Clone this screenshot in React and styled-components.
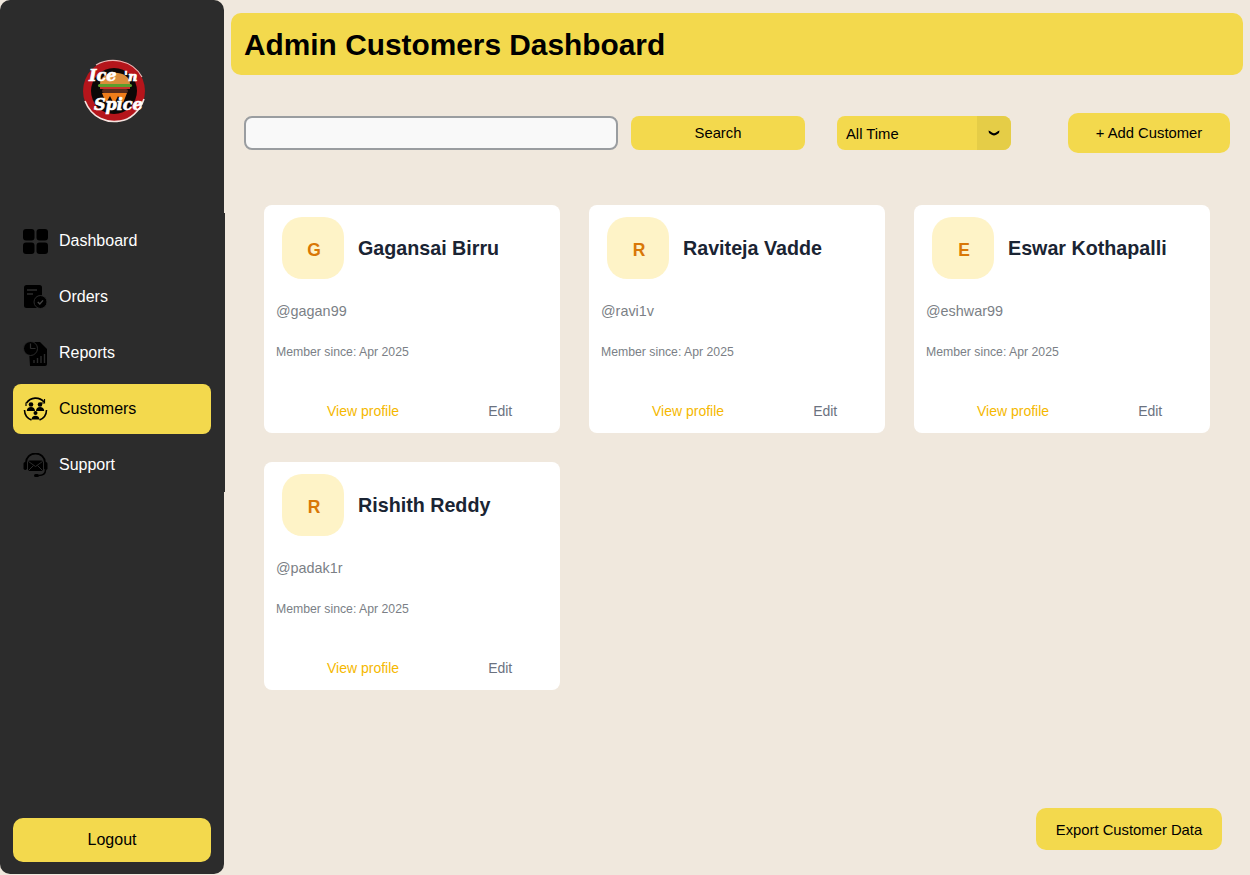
import React from "react";
import styled, { createGlobalStyle } from "styled-components";

const Global = createGlobalStyle`
  * { box-sizing: border-box; }
  html, body { margin: 0; padding: 0; height: 100%; background: #f0e8dd; }
  body { font-family: "Liberation Sans", Arial, sans-serif; }
`;

const Page = styled.div`
  display: flex;
  width: 1250px;
  height: 875px;
  overflow: hidden;
`;

const Sidebar = styled.aside`
  width: 224px;
  height: 874px;
  flex: none;
  background: #2c2c2c;
  border-radius: 10px;
  display: flex;
  flex-direction: column;
`;

const LogoArea = styled.div`
  height: 213px;
  display: flex;
  justify-content: center;
  align-items: flex-start;
  padding: 57px 0 0 5px;
`;

const Nav = styled.nav`
  width: 225px;
  background: #2c2c2c;
  padding: 3px 13px 2px;
  display: flex;
  flex-direction: column;
  gap: 6px;
`;

const NavItem = styled.a`
  height: 50px;
  width: 198px;
  display: flex;
  align-items: center;
  gap: 11px;
  padding-left: 10px;
  border-radius: 8px;
  font-size: 16px;
  color: ${(p) => (p.$active ? "#000" : "#fff")};
  background: ${(p) => (p.$active ? "#f3d94d" : "transparent")};
`;

const IconBox = styled.span`
  width: 25px;
  height: 25px;
  flex: none;
  display: block;
  svg { display: block; }
`;

const Logout = styled.button`
  margin: auto 13px 12px;
  height: 44px;
  width: 198px;
  flex: none;
  border: 0;
  border-radius: 10px;
  background: #f3d94d;
  color: #000;
  font: 16px "Liberation Sans", Arial, sans-serif;
`;

const Main = styled.main`
  flex: 1;
  min-width: 0;
  display: flex;
  flex-direction: column;
  height: 875px;
`;

const Header = styled.header`
  margin: 13px 7px 0 7px;
  height: 62px;
  background: #f3d94d;
  border-radius: 10px;
  display: flex;
  align-items: center;
  padding: 2px 0 0 13px;
`;

const Title = styled.h1`
  margin: 0;
  font-size: 29.85px;
  font-weight: 700;
  color: #000;
`;

const Toolbar = styled.div`
  display: flex;
  align-items: center;
  height: 40px;
  margin-top: 38px;
  padding-left: 20px;
`;

const SearchInput = styled.input`
  width: 374px;
  height: 34px;
  flex: none;
  border: 2px solid #9a9da0;
  border-radius: 8px;
  background: #f9f9f9;
  outline: none;
`;

const YellowButton = styled.button`
  flex: none;
  border: 0;
  background: #f3d94d;
  color: #000;
  padding: ${(p) => p.$pt || 0}px 0 ${(p) => p.$pb || 0}px;
  font: 14.8px "Liberation Sans", Arial, sans-serif;
  border-radius: ${(p) => p.$radius || 8}px;
  width: ${(p) => p.$w}px;
  height: ${(p) => p.$h}px;
  margin-left: ${(p) => p.$ml || 0}px;
`;

const SelectBox = styled.div`
  width: 174px;
  height: 34px;
  margin-left: 32px;
  flex: none;
  display: flex;
  border-radius: 8px;
  overflow: hidden;
  background: #f3d94d;
`;

const SelectLabel = styled.span`
  flex: 1;
  padding-left: 9px;
  font-size: 14.8px;
  line-height: 36px;
  color: #000;
`;

const SelectArrow = styled.span`
  width: 34px;
  background: #e5cd47;
  display: flex;
  align-items: center;
  justify-content: center;
  svg { display: block; }
`;

const Grid = styled.section`
  display: grid;
  grid-template-columns: repeat(3, 296px);
  gap: 29px;
  margin: 52px 0 0 40px;
`;

const Card = styled.article`
  height: 228px;
  background: #fff;
  border-radius: 8px;
  padding: 12px;
  display: flex;
  flex-direction: column;
`;

const CardHead = styled.div`
  display: flex;
  align-items: center;
  gap: 14px;
  padding-left: 6px;
`;

const Avatar = styled.div`
  width: 62px;
  height: 62px;
  border-radius: 20px;
  background: #fef3c7;
  color: #d97706;
  font-size: 17.5px;
  font-weight: 700;
  display: flex;
  align-items: center;
  justify-content: center;
  padding: 4px 0 0 2px;
`;

const Name = styled.h3`
  margin: 0;
  font-size: 19.7px;
  font-weight: 700;
  color: #1a2433;
`;

const Handle = styled.p`
  margin: 24px 0 0;
  font-size: 14.4px;
  line-height: 16px;
  color: #7b7f86;
`;

const Since = styled.p`
  margin: 26px 0 0;
  font-size: 12.25px;
  line-height: 14px;
  color: #7b7f86;
`;

const Actions = styled.div`
  margin-top: auto;
  margin-bottom: 2px;
  padding-left: 51px;
  display: flex;
  gap: 89px;
  font-size: 14px;
  line-height: 16px;
`;

const ActionLink = styled.a`
  color: ${(p) => (p.$primary ? "#f5b800" : "#6b7280")};
`;

const Footer = styled.div`
  margin-top: auto;
  padding: 0 28px 25px 0;
  display: flex;
  justify-content: flex-end;
`;

const Logo = () => (
  <svg width="66" height="68" viewBox="0 0 66 68">
    <circle cx="32" cy="34" r="31" fill="#b5151b" />
    <path d="M3 44C10 62 26 66 38 64C48 63 58 54 62 42" fill="none" stroke="#f3e4e0" strokeWidth="1.6" />
    <path d="M14 8C28 0 50 2 60 20" fill="none" stroke="#e9b7b5" strokeWidth="1.2" />
    <circle cx="32" cy="34" r="23" fill="#0c0807" />
    <path d="M18 27C18 12 48 12 48 27Z" fill="#d98d3b" />
    <rect x="16" y="27" width="34" height="3" rx="1.5" fill="#5c9e2e" />
    <rect x="18" y="30" width="30" height="2" fill="#c9302c" />
    <rect x="20" y="32" width="26" height="4" rx="2" fill="#5a2d1c" />
    <path d="M20 36L24 46L28 39L32 47L36 39L41 46L45 36Z" fill="#ef7d1a" />
    <g fontFamily="'DejaVu Serif', serif" fontWeight="700" fontStyle="italic" fill="#fff" stroke="#fff" strokeWidth="0.7">
      <text x="7" y="24" fontSize="16">Ice</text>
      <text x="42" y="24" fontSize="13">'n</text>
      <text x="12" y="53" fontSize="16">Spice</text>
    </g>
  </svg>
);

const GridIcon = () => (
  <svg width="25" height="25" viewBox="0 0 25 25" fill="#000">
    <rect x="0" y="0" width="11.5" height="11.5" rx="3" />
    <rect x="13.5" y="0" width="11.5" height="11.5" rx="3" />
    <rect x="0" y="13.5" width="11.5" height="11.5" rx="3" />
    <rect x="13.5" y="13.5" width="11.5" height="11.5" rx="3" />
  </svg>
);

const OrdersIcon = () => (
  <svg width="25" height="25" viewBox="0 0 25 25">
    <rect x="1" y="0" width="18" height="23" rx="2.5" fill="#000" />
    <path d="M4 5h10M4 9h6" stroke="#2c2c2c" strokeWidth="1.5" />
    <circle cx="17.5" cy="17" r="6.5" fill="#000" stroke="#2c2c2c" strokeWidth="1" />
    <path d="M14.8 17l2 2 3.2-3.6" fill="none" stroke="#444" strokeWidth="1.4" />
  </svg>
);

const ReportsIcon = () => (
  <svg width="25" height="25" viewBox="0 0 25 25">
    <path d="M6 9V3a2 2 0 0 1 2-2h9l7 7v15a2 2 0 0 1-2 2H7z" fill="#000" />
    <circle cx="7.5" cy="7.5" r="7" fill="#000" stroke="#2c2c2c" strokeWidth="1" />
    <path d="M7.5 7.5V2.5M7.5 7.5h5" stroke="#2c2c2c" strokeWidth="1.2" />
    <path d="M11 22v-3M14.5 22v-5M18 22v-7M21.5 22v-9" stroke="#2c2c2c" strokeWidth="1.4" />
  </svg>
);

const CustomersIcon = () => (
  <svg width="25" height="25" viewBox="0 0 25 25" fill="#000">
    <path d="M3.500 6A11 11 0 0 1 21 5M23.500 13a11 11 0 0 1-7 10M8.500 23a11 11 0 0 1-7-10" fill="none" stroke="#000" strokeWidth="1.600" />
    <path d="M21.500 2v4h-4M3 9V5.500" fill="none" stroke="#000" strokeWidth="1.200" />
    <circle cx="8" cy="7.500" r="2.300" />
    <circle cx="17" cy="7.500" r="2.300" />
    <path d="M3.800 14c0-2.600 1.800-4 4.200-4s4 1.400 4 4zM13 14c0-2.600 1.600-4 4-4s4.200 1.400 4.200 4z" />
    <circle cx="12.500" cy="16" r="2" />
    <path d="M8.500 22.500c0-2.400 1.600-3.800 4-3.800s4 1.400 4 3.800z" />
  </svg>
);

const SupportIcon = () => (
  <svg width="25" height="25" viewBox="0 0 25 25">
    <path d="M3 12V9.500a9.500 9 0 0 1 19 0V12" fill="none" stroke="#000" strokeWidth="1.800" />
    <rect x="0.500" y="9" width="3.500" height="8" rx="1.700" fill="#000" />
    <rect x="21" y="9" width="3.500" height="8" rx="1.700" fill="#000" />
    <rect x="5" y="7.500" width="15" height="10.500" rx="1.500" fill="#000" />
    <path d="M5.500 8.500l7 5 7-5M5.500 17.500l5-5M19.500 17.500l-5-5" fill="none" stroke="#2c2c2c" strokeWidth="1" />
    <path d="M22.500 17c0 4-3 5.500-7 5.500" fill="none" stroke="#000" strokeWidth="1.500" />
    <rect x="11" y="21" width="5" height="3" rx="1.500" fill="#000" />
  </svg>
);

const navItems = [
  { label: "Dashboard", Icon: GridIcon },
  { label: "Orders", Icon: OrdersIcon },
  { label: "Reports", Icon: ReportsIcon },
  { label: "Customers", Icon: CustomersIcon, active: true },
  { label: "Support", Icon: SupportIcon },
];

const customers = [
  { name: "Gagansai Birru", handle: "@gagan99" },
  { name: "Raviteja Vadde", handle: "@ravi1v" },
  { name: "Eswar Kothapalli", handle: "@eshwar99" },
  { name: "Rishith Reddy", handle: "@padak1r" },
];

export default function App() {
  return (
    <Page>
      <Global />
      <Sidebar>
        <LogoArea>
          <Logo />
        </LogoArea>
        <Nav>
          {navItems.map(({ label, Icon, active }) => (
            <NavItem key={label} $active={active}>
              <IconBox>
                <Icon />
              </IconBox>
              {label}
            </NavItem>
          ))}
        </Nav>
        <Logout>Logout</Logout>
      </Sidebar>
      <Main>
        <Header>
          <Title>Admin Customers Dashboard</Title>
        </Header>
        <Toolbar>
          <SearchInput />
          <YellowButton $w={174} $h={34} $ml={13} $pb={1}>Search</YellowButton>
          <SelectBox>
            <SelectLabel>All Time</SelectLabel>
            <SelectArrow>
              <svg width="12" height="6" viewBox="0 0 12 6">
                <path d="M0.500 0.500C3 1.500 4.500 3 6 3.300C7.500 3 9 1.500 11.500 0.500L11 3C9 4.500 7.500 5.500 6 5.500C4.500 5.500 3 4.500 1 3Z" fill="#000" />
              </svg>
            </SelectArrow>
          </SelectBox>
          <YellowButton $w={162} $h={40} $ml={57} $radius={10} $pb={1}>+ Add Customer</YellowButton>
        </Toolbar>
        <Grid>
          {customers.map((c) => (
            <Card key={c.handle}>
              <CardHead>
                <Avatar>{c.name[0]}</Avatar>
                <Name>{c.name}</Name>
              </CardHead>
              <Handle>{c.handle}</Handle>
              <Since>Member since: Apr 2025</Since>
              <Actions>
                <ActionLink $primary>View profile</ActionLink>
                <ActionLink>Edit</ActionLink>
              </Actions>
            </Card>
          ))}
        </Grid>
        <Footer>
          <YellowButton $w={186} $h={42} $radius={10} $pt={1}>Export Customer Data</YellowButton>
        </Footer>
      </Main>
    </Page>
  );
}
